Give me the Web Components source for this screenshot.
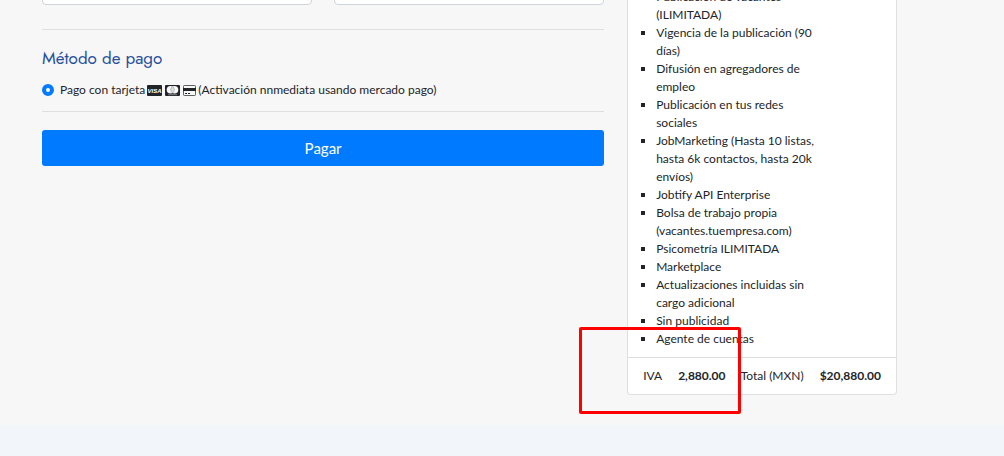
<!DOCTYPE html>
<html lang="es">
<head>
<meta charset="utf-8">
<title>Pago</title>
<style>
  body{
    margin: 0;
    min-height: 100vh;
    background: #f2f6fa;
    color: #212529;
    font: 12px/18px Lato, "Open Sans", sans-serif;
    overflow: hidden;
  }
</style>
</head>
<body>

<checkout-page>
  <payment-form slot="form"></payment-form>
  <order-summary slot="summary">
    <plan-features slot="features"></plan-features>
    <order-amount slot="total" label="IVA">2,880.00</order-amount>
    <order-amount slot="total" label="Total (MXN)">$20,880.00</order-amount>
    <highlight-box slot="mark"></highlight-box>
  </order-summary>
</checkout-page>

<script>
(function checkout(document){
  'use strict';

  class CheckoutPage extends HTMLElement{
    constructor(){
      super();
      const shadowRoot = this.attachShadow({mode: 'open'});
      shadowRoot.innerHTML = `
        <style>
          :host{
            display: block;
            background: #f7f7f7;
            overflow: hidden;
          }
          main{
            display: grid;
            grid-template-columns: minmax(0, 25fr) minmax(0, 12fr);
            gap: 23px;
            align-items: start;
            padding: 0 107px 30px 42px;
          }
        </style>
        <main>
          <slot name="form"></slot>
          <slot name="summary"></slot>
        </main>
      `;
    }
  }

  class CardIcon extends HTMLElement{
    constructor(){
      super();
      const shadowRoot = this.attachShadow({mode: 'open'});
      const icons = {
        visa: `
          <svg width="15" height="12" viewBox="0 0 15 12">
            <rect y="1" width="15" height="11" rx="1" fill="#212529"/>
            <text x="7.5" y="8.5" text-anchor="middle" fill="#fff" font-family="Liberation Sans, sans-serif" font-size="6" font-weight="700" font-style="italic">VISA</text>
          </svg>`,
        mastercard: `
          <svg width="15" height="12" viewBox="0 0 15 12">
            <rect y="1" width="15" height="11" rx="1" fill="#212529"/>
            <circle cx="5.5" cy="5.8" r="3.8" fill="#f7f7f7"/>
            <circle cx="9.5" cy="5.8" r="3.8" fill="#f7f7f7"/>
            <path d="M7.500 2.600a3.800 3.800 0 0 0 0 6.400a3.800 3.800 0 0 0 0-6.400z" fill="#dcddde" stroke="#85898d" stroke-width=".5"/>
            <path d="M3 10.700h9" stroke="#a5a7a9" stroke-width=".7"/>
          </svg>`,
        credit: `
          <svg width="13" height="12" viewBox="0 0 13 12">
            <rect x=".5" y="1.5" width="12" height="10" rx=".7" fill="none" stroke="#5c5f63"/>
            <path d="M0 4h13v3H0z" fill="#212529"/>
            <path d="M2 9.500h2M5 9.500h2" stroke="#212529"/>
          </svg>`
      };
      shadowRoot.innerHTML = `
        <style>
          :host{ display: inline-flex; }
          svg{ display: block; }
        </style>
        ${icons[this.getAttribute('brand')]}
      `;
    }
  }

  class PaymentForm extends HTMLElement{
    constructor(){
      super();
      const shadowRoot = this.attachShadow({mode: 'open'});
      shadowRoot.innerHTML = `
        <style>
          :host{ display: block; }
          .fields{
            display: grid;
            grid-template-columns: 1fr 1fr;
            gap: 22px;
            margin-top: -33px;
          }
          .fields input{
            box-sizing: border-box;
            width: 100%;
            height: 38px;
            border: 1px solid #ced4da;
            border-radius: 4px;
            background: #fff;
            font: inherit;
          }
          hr{
            border: 0;
            border-top: 1px solid #dedfdf;
            margin: 24px 0 16px;
          }
          h4{
            margin: 0;
            color: #27509b;
            font: 400 17px/24px Futura, Jost, Lato, sans-serif;
          }
          label{
            display: flex;
            align-items: center;
            margin-top: 11px;
          }
          .icons{
            display: flex;
            gap: 3px;
            margin: 0 2px;
          }
          input[type=radio]{
            appearance: none;
            box-sizing: border-box;
            width: 12px;
            height: 12px;
            margin: 0 6px 0 0;
            border: 4px solid #007bff;
            border-radius: 50%;
            background: #fff;
          }
          hr.end{ margin: 12px 0 18px; }
          button{
            display: block;
            width: 100%;
            height: 36px;
            padding: 0;
            border: 0;
            border-radius: 3px;
            background: #007bff;
            color: #fff;
            font: 400 15px/24px Lato, sans-serif;
            cursor: pointer;
          }
        </style>
        <form>
          <div class="fields">
            <input type="text" aria-label="Nombre">
            <input type="text" aria-label="Correo">
          </div>
          <hr>
          <h4>Método de pago</h4>
          <label>
            <input type="radio" name="pago" checked>
            <span>Pago con tarjeta</span>
            <span class="icons">
              <card-icon brand="visa"></card-icon>
              <card-icon brand="mastercard"></card-icon>
              <card-icon brand="credit"></card-icon>
            </span>
            <span>(Activación nnmediata usando mercado pago)</span>
          </label>
          <hr class="end">
          <button type="button">Pagar</button>
        </form>
      `;
    }
  }

  class OrderSummary extends HTMLElement{
    constructor(){
      super();
      const shadowRoot = this.attachShadow({mode: 'open'});
      shadowRoot.innerHTML = `
        <style>
          :host{
            display: block;
            position: relative;
            background: #fff;
            border: 1px solid #dfdfdf;
            border-top: 0;
            border-radius: 0 0 4px 4px;
          }
          footer{
            display: flex;
            justify-content: space-between;
            padding: 9px 15px;
            border-top: 1px solid #dfdfdf;
          }
        </style>
        <slot name="features"></slot>
        <footer><slot name="total"></slot></footer>
        <slot name="mark"></slot>
      `;
    }
  }

  class PlanFeatures extends HTMLElement{
    constructor(){
      super();
      const shadowRoot = this.attachShadow({mode: 'open'});
      shadowRoot.innerHTML = `
        <style>
          :host{ display: block; }
          ul{
            list-style: square;
            margin: -12px 0 0;
            padding: 0 76px 9px 28px;
          }
        </style>
        <ul></ul>
      `;

      const features = [
        'Publicación de vacantes (ILIMITADA)',
        'Vigencia de la publicación (90 días)',
        'Difusión en agregadores de empleo',
        'Publicación en tus redes sociales',
        'JobMarketing (Hasta 10 listas, hasta 6k contactos, hasta 20k envíos)',
        'Jobtify API Enterprise',
        'Bolsa de trabajo propia (vacantes.tuempresa.com)',
        'Psicometría ILIMITADA',
        'Marketplace',
        'Actualizaciones incluidas sin cargo adicional',
        'Sin publicidad',
        'Agente de cuentas'
      ];
      const ul = shadowRoot.querySelector('ul');
      features.forEach(text => {
        const li = document.createElement('li');
        li.textContent = text;
        ul.appendChild(li);
      });
    }
  }

  class OrderAmount extends HTMLElement{
    constructor(){
      super();
      const shadowRoot = this.attachShadow({mode: 'open'});
      shadowRoot.innerHTML = `
        <style>
          :host{
            display: flex;
            gap: 16px;
          }
        </style>
        <span>${this.getAttribute('label')}</span>
        <strong><slot></slot></strong>
      `;
    }
  }

  // red frame laid over the IVA amount
  class HighlightBox extends HTMLElement{
    constructor(){
      super();
      const shadowRoot = this.attachShadow({mode: 'open'});
      shadowRoot.innerHTML = `
        <style>
          :host{
            position: absolute;
            box-sizing: border-box;
            left: -49px;
            bottom: -20px;
            width: 162px;
            height: 87px;
            border: 3px solid #f00;
            border-radius: 2px;
            pointer-events: none;
          }
        </style>
      `;
    }
  }

  customElements.define('card-icon', CardIcon);
  customElements.define('payment-form', PaymentForm);
  customElements.define('plan-features', PlanFeatures);
  customElements.define('order-amount', OrderAmount);
  customElements.define('highlight-box', HighlightBox);
  customElements.define('order-summary', OrderSummary);
  customElements.define('checkout-page', CheckoutPage);

})(document);
</script>
</body>
</html>
